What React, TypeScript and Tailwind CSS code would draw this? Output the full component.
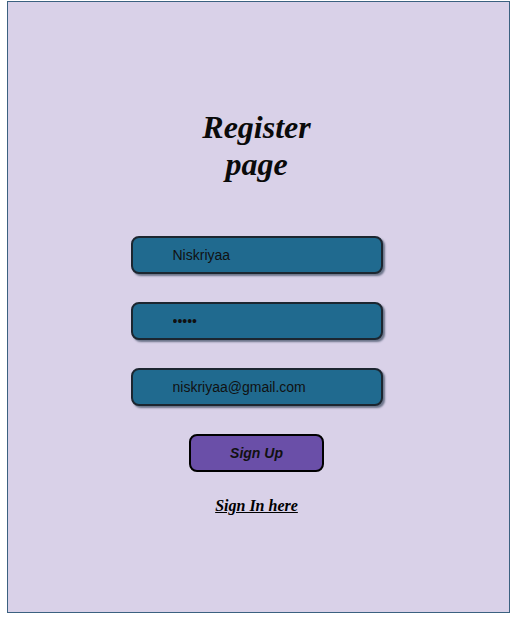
import React from "react";

const field =
  "box-border h-[38px] w-[252px] rounded-[8px] border-2 border-[#1c2630] bg-[#206a8f] pl-[40px] text-[14px] text-[#111] shadow-[2px_2px_2px_#6b7388] outline-none [font-family:'Liberation_Sans',Arial,sans-serif]";

export default function App() {
  return (
    <div className="min-h-[617px] bg-white pl-[7px] pt-[1px]">
      <div className="box-border flex h-[612px] w-[503px] flex-col items-center border border-[#3b6180] bg-[#d9d1e8] pr-[4px]">
        <h1 className="mt-[107px] text-center text-[32px] leading-[37px] font-bold italic text-[#0a0a0a] [font-family:'Liberation_Serif','Times_New_Roman',serif]">
          <span className="block">Register</span>
          <span className="block">page</span>
        </h1>

        <form className="mt-[53px] flex flex-col items-center gap-[28px]" onSubmit={(e) => e.preventDefault()}>
          <input className={field} defaultValue="Niskriyaa" />
          <input className={field} type="password" defaultValue="12345" />
          <input className={field} defaultValue="niskriyaa@gmail.com" />
          <button
            type="submit"
            className="box-border h-[38px] w-[135px] rounded-[8px] border-2 border-black bg-[#6a4fa8] text-[14px] font-bold italic text-[#111] [font-family:'Liberation_Sans',Arial,sans-serif]"
          >
            Sign Up
          </button>
        </form>

        <a
          href="#"
          className="mt-[22px] text-[16px] font-bold italic text-black underline [font-family:'Liberation_Serif','Times_New_Roman',serif]"
        >
          Sign In here
        </a>
      </div>
    </div>
  );
}
